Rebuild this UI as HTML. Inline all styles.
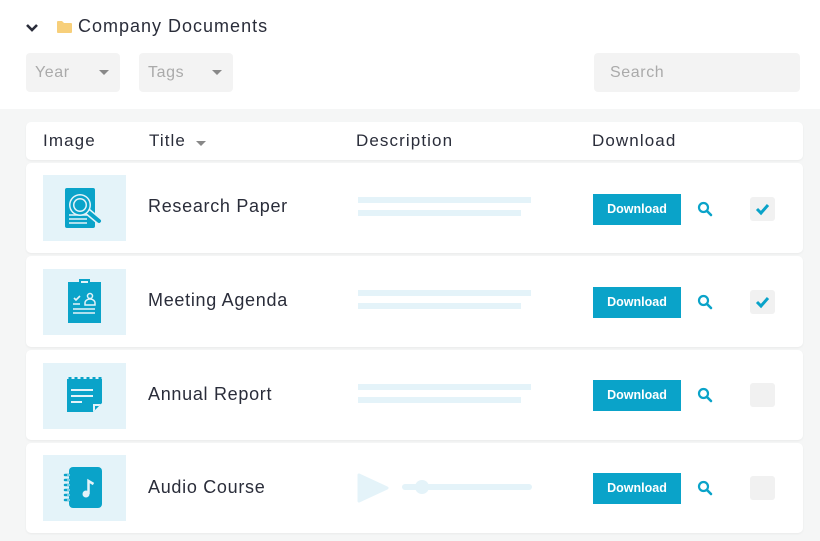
<!DOCTYPE html>
<html><head><style>
*{margin:0;padding:0;box-sizing:border-box}
body{width:820px;height:541px;background:#fff;font-family:"Liberation Sans",sans-serif;position:relative;overflow:hidden;color:#2a2d3a}
.a{position:absolute}
.gray{left:0;top:109px;width:820px;height:432px;background:#f5f6f6}
.card{position:absolute;left:26px;width:777px;background:#fff;border-radius:5px;box-shadow:0 1px 2px rgba(0,0,0,.05)}
.sel{background:#f3f3f3;border-radius:4px;color:#aaa;font-size:16px;padding:11px 9px;letter-spacing:.6px}
.tri{position:absolute;width:0;height:0;border-left:5px solid transparent;border-right:5px solid transparent;border-top:5px solid #888}
.th{position:absolute;top:131px;font-size:17px;color:#2a2d3a;letter-spacing:1.1px}
.thumb{position:absolute;left:43px;width:83px;height:66px;background:#e4f3f9}
.title{position:absolute;left:148px;font-size:18px;color:#2a2d3a;letter-spacing:.7px}
.ln{position:absolute;left:358px;height:6px;background:#e4f3f9}
.btn{position:absolute;left:593px;width:88px;height:31px;background:#0aa3c9;color:#fff;font-size:12.5px;font-weight:bold;text-align:center;line-height:31px}
.chk{position:absolute;left:750px;width:25px;height:24px;background:#f1f1f1;border-radius:3px}
</style></head><body>
<svg class="a" style="left:25px;top:22px" width="14" height="12" viewBox="0 0 14 12"><path d="M2 3l5 5 5-5" stroke="#2a2d3a" stroke-width="2.6" fill="none"/></svg>
<svg class="a" style="left:57px;top:20px" width="15" height="13" viewBox="0 0 15 13"><path d="M0 2a1 1 0 0 1 1-1h4l2 2h7a1 1 0 0 1 1 1v8a1 1 0 0 1-1 1H1a1 1 0 0 1-1-1z" fill="#f7cf7a"/></svg>
<div class="a" style="left:78px;top:16px;font-size:18px;letter-spacing:1px">Company Documents</div>
<div class="a sel" style="left:26px;top:53px;width:94px;height:39px">Year<span class="tri" style="left:73px;top:17px"></span></div>
<div class="a sel" style="left:139px;top:53px;width:94px;height:39px">Tags<span class="tri" style="left:73px;top:17px"></span></div>
<div class="a sel" style="left:594px;top:53px;width:206px;height:39px;padding-left:16px">Search</div>
<div class="a gray"></div>
<div class="card" style="top:122px;height:38px"></div>
<div class="th" style="left:43px">Image</div>
<div class="th" style="left:149px">Title</div><span class="tri" style="left:196px;top:141px"></span>
<div class="th" style="left:356px">Description</div>
<div class="th" style="left:592px">Download</div>

<div class="card" style="top:163px;height:90px"></div>
<div class="card" style="top:256px;height:91px"></div>
<div class="card" style="top:350px;height:90px"></div>
<div class="card" style="top:443px;height:90px"></div>

<div class="thumb" style="top:175px"><svg width="83" height="66" viewBox="0 0 83 66"><rect x="22" y="13" width="30" height="40" rx="2" fill="#0aa3c9"/><path d="M26 40h18M26 44h18M26 48h18" stroke="#e4f3f9" stroke-width="1.6"/><path d="M44 36l12 10" stroke="#e4f3f9" stroke-width="7" stroke-linecap="round"/><path d="M44 36l12 10" stroke="#0aa3c9" stroke-width="4" stroke-linecap="round"/><circle cx="37" cy="30" r="11" fill="#e4f3f9"/><circle cx="37" cy="30" r="9.5" fill="#0aa3c9"/><circle cx="37" cy="30" r="7" fill="#e4f3f9"/><circle cx="37" cy="30" r="5.5" fill="#0aa3c9"/></svg></div>
<div class="thumb" style="top:269px"><svg width="83" height="66" viewBox="0 0 83 66"><rect x="25" y="13" width="33" height="41" fill="#0aa3c9"/><rect x="36" y="10" width="11" height="6" fill="#0aa3c9"/><rect x="38" y="12" width="7" height="2" fill="#e4f3f9"/><path d="M31 29l2 2 4-4" stroke="#e4f3f9" stroke-width="1.6" fill="none"/><circle cx="47" cy="27" r="2.5" stroke="#e4f3f9" stroke-width="1.5" fill="none"/><path d="M42 36v-2a5 4 0 0 1 10 0v2z" stroke="#e4f3f9" stroke-width="1.5" fill="none"/><path d="M30 35h7M30 40h22M30 44h22" stroke="#e4f3f9" stroke-width="1.5"/></svg></div>
<div class="thumb" style="top:363px"><svg width="83" height="66" viewBox="0 0 83 66"><path d="M24 16h35v24l-9 9H24z" fill="#0aa3c9"/><path d="M27 14v4M33 14v4M39 14v4M45 14v4M51 14v4M57 14v4" stroke="#0aa3c9" stroke-width="3"/><path d="M28 27h22M28 33h22M28 39h11" stroke="#e4f3f9" stroke-width="2"/><path d="M50 49v-8h8" fill="#e4f3f9"/><path d="M52 47v-4h4z" fill="#0aa3c9"/></svg></div>
<div class="thumb" style="top:455px"><svg width="83" height="66" viewBox="0 0 83 66"><rect x="26" y="12" width="33" height="41" rx="4" fill="#0aa3c9"/><path d="M22 20h7M22 25h7M22 30h7M22 35h7M22 40h7M22 45h7" stroke="#0aa3c9" stroke-width="2.5" stroke-linecap="round"/><path d="M24 20h3M24 25h3M24 30h3M24 35h3M24 40h3M24 45h3" stroke="#e4f3f9" stroke-width="1"/><circle cx="43" cy="39" r="3.5" fill="#e4f3f9"/><path d="M45.5 39V26l5 3" stroke="#e4f3f9" stroke-width="2.5" fill="none"/></svg></div>

<div class="title" style="top:196px">Research Paper</div>
<div class="title" style="top:290px">Meeting Agenda</div>
<div class="title" style="top:384px">Annual Report</div>
<div class="title" style="top:477px">Audio Course</div>

<div class="ln" style="top:197px;width:173px"></div><div class="ln" style="top:210px;width:163px"></div>
<div class="ln" style="top:290px;width:173px"></div><div class="ln" style="top:303px;width:163px"></div>
<div class="ln" style="top:384px;width:173px"></div><div class="ln" style="top:397px;width:163px"></div>
<svg class="a" style="left:356px;top:470px" width="180" height="36"><path d="M3 5l28 13-28 13z" fill="#e4f3f9" stroke="#e4f3f9" stroke-width="3" stroke-linejoin="round"/><path d="M49 17h124" stroke="#e4f3f9" stroke-width="6" stroke-linecap="round"/><circle cx="66" cy="17" r="7" fill="#e4f3f9"/></svg>

<div class="btn" style="top:194px">Download</div>
<div class="btn" style="top:287px">Download</div>
<div class="btn" style="top:380px">Download</div>
<div class="btn" style="top:473px">Download</div>

<svg class="a" style="left:697px;top:201px" width="16" height="16"><circle cx="6.5" cy="6.5" r="4.5" stroke="#0aa3c9" stroke-width="2.2" fill="none"/><path d="M10 10l4 4" stroke="#0aa3c9" stroke-width="2.6" stroke-linecap="round"/></svg>
<svg class="a" style="left:697px;top:294px" width="16" height="16"><circle cx="6.5" cy="6.5" r="4.5" stroke="#0aa3c9" stroke-width="2.2" fill="none"/><path d="M10 10l4 4" stroke="#0aa3c9" stroke-width="2.6" stroke-linecap="round"/></svg>
<svg class="a" style="left:697px;top:387px" width="16" height="16"><circle cx="6.5" cy="6.5" r="4.5" stroke="#0aa3c9" stroke-width="2.2" fill="none"/><path d="M10 10l4 4" stroke="#0aa3c9" stroke-width="2.6" stroke-linecap="round"/></svg>
<svg class="a" style="left:697px;top:480px" width="16" height="16"><circle cx="6.5" cy="6.5" r="4.5" stroke="#0aa3c9" stroke-width="2.2" fill="none"/><path d="M10 10l4 4" stroke="#0aa3c9" stroke-width="2.6" stroke-linecap="round"/></svg>

<div class="chk" style="top:197px"><svg width="25" height="24"><path d="M7 12l4 4 7-8" stroke="#0aa3c9" stroke-width="3" fill="none"/></svg></div>
<div class="chk" style="top:290px"><svg width="25" height="24"><path d="M7 12l4 4 7-8" stroke="#0aa3c9" stroke-width="3" fill="none"/></svg></div>
<div class="chk" style="top:383px"></div>
<div class="chk" style="top:476px"></div>
</body></html>
